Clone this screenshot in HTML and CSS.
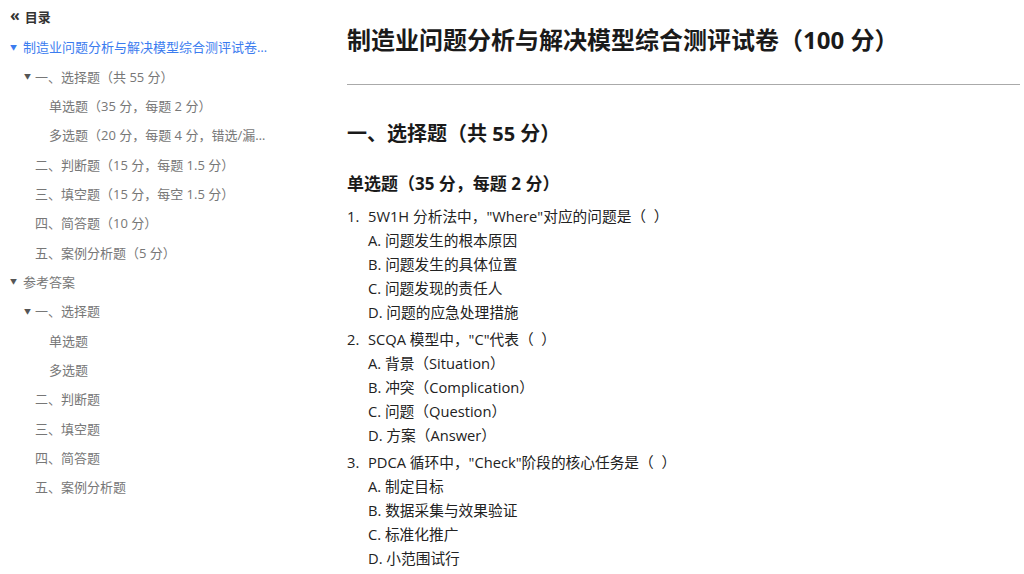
FILE: index.html
```html
<!DOCTYPE html>
<html lang="zh">
<head>
<meta charset="utf-8">
<title>制造业问题分析与解决模型综合测评试卷</title>
<link rel="stylesheet" href="styles.css">
</head>
<body>
<div class="page">
  <nav class="toc">
    <div class="toc-head"><span class="toc-icon">«</span><span>目录</span></div>
    <ul class="tree">
      <li class="node lv0 open active"><span class="caret">▼</span><span class="label">制造业问题分析与解决模型综合测评试卷（100 分）</span></li>
      <li class="node lv1 open"><span class="caret">▼</span><span class="label">一、选择题（共 55 分）</span></li>
      <li class="node lv2"><span class="label">单选题（35 分，每题 2 分）</span></li>
      <li class="node lv2"><span class="label">多选题（20 分，每题 4 分，错选/漏选不得分）</span></li>
      <li class="node lv1"><span class="label">二、判断题（15 分，每题 1.5 分）</span></li>
      <li class="node lv1"><span class="label">三、填空题（15 分，每空 1.5 分）</span></li>
      <li class="node lv1"><span class="label">四、简答题（10 分）</span></li>
      <li class="node lv1"><span class="label">五、案例分析题（5 分）</span></li>
      <li class="node lv0 open"><span class="caret">▼</span><span class="label">参考答案</span></li>
      <li class="node lv1 open"><span class="caret">▼</span><span class="label">一、选择题</span></li>
      <li class="node lv2"><span class="label">单选题</span></li>
      <li class="node lv2"><span class="label">多选题</span></li>
      <li class="node lv1"><span class="label">二、判断题</span></li>
      <li class="node lv1"><span class="label">三、填空题</span></li>
      <li class="node lv1"><span class="label">四、简答题</span></li>
      <li class="node lv1"><span class="label">五、案例分析题</span></li>
    </ul>
  </nav>
  <main class="doc">
    <h1 class="title">制造业问题分析与解决模型综合测评试卷（100 分）</h1>
    <hr class="rule">
    <h2 class="sec">一、选择题（共 55 分）</h2>
    <h3 class="sub">单选题（35 分，每题 2 分）</h3>
    <ol class="qs">
      <li class="q">5W1H 分析法中，"Where"对应的问题是（&nbsp;&nbsp;）
        <div class="opt">A. 问题发生的根本原因</div>
        <div class="opt">B. 问题发生的具体位置</div>
        <div class="opt">C. 问题发现的责任人</div>
        <div class="opt">D. 问题的应急处理措施</div>
      </li>
      <li class="q">SCQA 模型中，"C"代表（&nbsp;&nbsp;）
        <div class="opt">A. 背景（Situation）</div>
        <div class="opt">B. 冲突（Complication）</div>
        <div class="opt">C. 问题（Question）</div>
        <div class="opt">D. 方案（Answer）</div>
      </li>
      <li class="q">PDCA 循环中，"Check"阶段的核心任务是（&nbsp;&nbsp;）
        <div class="opt">A. 制定目标</div>
        <div class="opt">B. 数据采集与效果验证</div>
        <div class="opt">C. 标准化推广</div>
        <div class="opt">D. 小范围试行</div>
      </li>
    </ol>
  </main>
</div>
</body>
</html>
```
FILE: styles.css
```css
html, body {
  margin: 0;
  padding: 0;
  background: #fff;
  font-family: "Open Sans", "Noto Sans CJK SC", sans-serif;
  color: #222;
}
.page {
  display: flex;
  height: 574px;
  overflow: hidden;
}
.toc {
  width: 264px;
  flex: none;
  padding: 5px 12px 0 10px;
  box-sizing: content-box;
  font-size: 13px;
  color: #777;
}
.toc-head {
  display: flex;
  align-items: center;
  gap: 5px;
  height: 22px;
  font-weight: bold;
  color: #333;
  font-size: 13px;
}
.toc-icon {
  font-size: 16px;
  line-height: 1;
  margin-top: -3px;
  font-weight: bold;
}
.tree {
  list-style: none;
  margin: 0;
  padding: 0;
  padding-top: 5px;
}
.node {
  display: flex;
  align-items: center;
  height: 29.35px;
  white-space: nowrap;
}
.node .label {
  overflow: hidden;
  text-overflow: ellipsis;
  min-width: 0;
}
.caret {
  font-size: 7px;
  width: 11px;
  flex: none;
  color: #555;
}
.lv0 { padding-left: 13px; }
.lv0 .caret { margin-left: -13px; width: 13px; }
.lv1 { padding-left: 25px; }
.lv1 .caret { margin-left: -11px; }
.lv2 { padding-left: 39px; }
.active, .active .caret { color: #3b7cef; }
.doc {
  flex: 1;
  padding: 0 4px 0 61px;
  min-width: 0;
}
.title {
  margin: 22px 0 0;
  font-size: 24px;
  line-height: 36px;
  font-weight: bold;
  color: #1a1a1a;
}
.rule {
  margin: 26px 0 0;
  border: none;
  border-top: 1px solid #aaa;
  height: 0;
}
.sec {
  margin: 34px 0 0;
  font-size: 20px;
  line-height: 30px;
  font-weight: bold;
  color: #1a1a1a;
}
.sub {
  margin: 22px 0 0;
  font-size: 17px;
  line-height: 26px;
  font-weight: bold;
  color: #1a1a1a;
}
.qs {
  margin: 7px 0 0;
  padding: 0;
  list-style: none;
  counter-reset: q;
  font-size: 14.7px;
  line-height: 24px;
  color: #222;
}
.q {
  counter-increment: q;
  margin-bottom: 3px;
  padding-left: 21px;
  position: relative;
}
.q::before {
  content: counter(q) ".";
  position: absolute;
  left: 0;
  top: 0;
}
```
